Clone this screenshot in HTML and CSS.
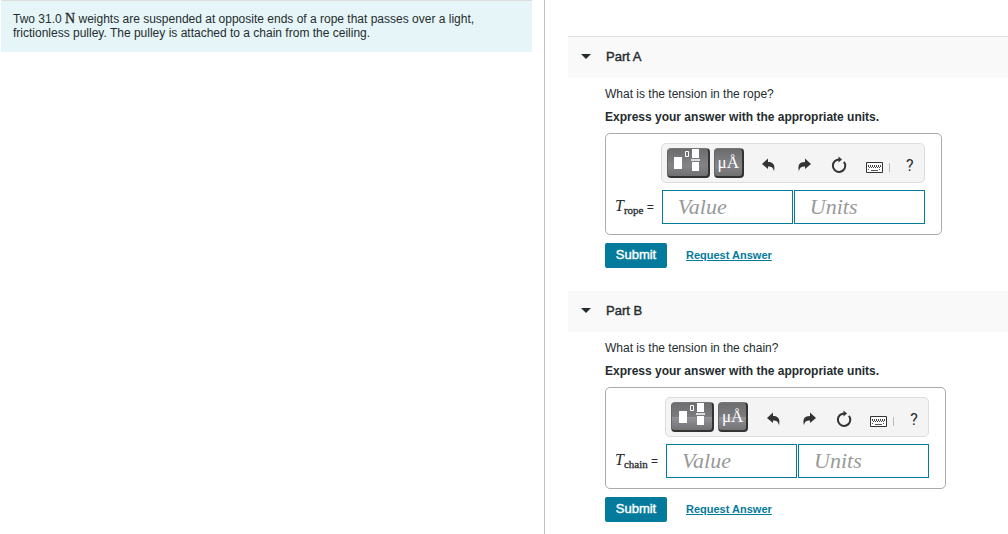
FILE: index.html
```html
<!DOCTYPE html>
<html lang="en">
<head>
<meta charset="utf-8">
<title>Pulley tension</title>
<link rel="stylesheet" href="styles.css">
</head>
<body>
<svg class="defs" aria-hidden="true">
  <symbol id="template" viewBox="0 0 27 22">
    <path fill="#fff" d="M0 8h8v12H0zM18 0h7v9h-7zM18 13h7v9h-7z"/>
    <path fill="#ddd" d="M17 10h9v2h-9z"/>
    <path fill="none" stroke="#fff" d="M11.500 2.500h3v5h-3z"/>
  </symbol>
  <symbol id="undo" viewBox="0 0 14 14">
    <path fill="#333" d="M0 6 6 0.500V4c5 0 7.500 2.500 6 9.500C11.500 9.800 9.500 8.500 6 8.500V11z"/>
  </symbol>
  <symbol id="redo" viewBox="0 0 14 14">
    <path fill="#333" d="M14 6 8 0.500V4C2.500 4 0.300 7 2 13.500 2.300 9.800 4.500 8.500 8 8.500V11z"/>
  </symbol>
  <symbol id="reset" viewBox="0 0 16 18">
    <path fill="none" stroke="#333" stroke-width="2" d="M8.500 3.500Q5.500 3.600 3.700 5.300A6.200 6.200 0 1 0 12.900 5.800"/>
    <path fill="#333" d="M7.500 0.500 11 3.500 7.500 6.500z"/>
  </symbol>
  <symbol id="keyboard" viewBox="0 0 24 11">
    <path fill="#fff" stroke="#333" d="M.5.500h16v10H.5z"/>
    <path fill="none" stroke="#444" stroke-dasharray="1 1" d="M2 3.500h13M3 5.500h12M2 4.500h13"/>
    <path fill="none" stroke="#555" stroke-dasharray="1 1" d="M2 7.500h2M13 7.500h2"/>
    <path fill="none" stroke="#555" d="M5 8.500h7"/>
    <path fill="none" stroke="#bbb" d="M23.500 1v9"/>
  </symbol>
</svg>
<div class="page">
  <section class="problem">
    <p class="statement">Two 31.0 <span class="unit">N</span> weights are suspended at opposite ends of a rope that passes over a light, frictionless pulley. The pulley is attached to a chain from the ceiling.</p>
  </section>
  <main class="parts">
    <section class="part part-first">
      <h2 class="part-header"><button class="part-toggle" type="button"><span class="caret"></span>Part A</button></h2>
      <div class="part-body">
        <p class="question">What is the tension in the rope?</p>
        <p class="instruction">Express your answer with the appropriate units.</p>
        <form class="answer">
          <div class="answer-box">
            <label class="symbol" for="rope-value"><i class="variable">T</i><span class="subscript">rope</span> =</label>
            <div class="editor">
              <div class="toolbar">
                <button class="palette palette-wide" type="button" aria-label="Templates"><svg class="template"><use href="#template"/></svg></button>
                <button class="palette" type="button">μÅ</button>
                <div class="tools">
                  <button class="tool" type="button" aria-label="Undo"><svg class="arrow"><use href="#undo"/></svg></button>
                  <button class="tool" type="button" aria-label="Redo"><svg class="arrow"><use href="#redo"/></svg></button>
                  <button class="tool" type="button" aria-label="Reset"><svg class="reset"><use href="#reset"/></svg></button>
                  <button class="tool tool-keyboard" type="button" aria-label="Keyboard shortcuts"><svg class="keyboard"><use href="#keyboard"/></svg></button>
                  <button class="tool tool-help" type="button">?</button>
                </div>
              </div>
              <div class="fields">
                <input class="field" id="rope-value" type="text" placeholder="Value">
                <input class="field" type="text" placeholder="Units" aria-label="Units">
              </div>
            </div>
          </div>
          <div class="actions">
            <button class="submit" type="button">Submit</button>
            <a class="request" href="#">Request Answer</a>
          </div>
        </form>
      </div>
    </section>
    <section class="part">
      <h2 class="part-header"><button class="part-toggle" type="button"><span class="caret"></span>Part B</button></h2>
      <div class="part-body">
        <p class="question">What is the tension in the chain?</p>
        <p class="instruction">Express your answer with the appropriate units.</p>
        <form class="answer">
          <div class="answer-box">
            <label class="symbol" for="chain-value"><i class="variable">T</i><span class="subscript">chain</span> =</label>
            <div class="editor">
              <div class="toolbar toolbar-glossy">
                <button class="palette palette-wide" type="button" aria-label="Templates"><svg class="template"><use href="#template"/></svg></button>
                <button class="palette" type="button">μÅ</button>
                <div class="tools">
                  <button class="tool" type="button" aria-label="Undo"><svg class="arrow"><use href="#undo"/></svg></button>
                  <button class="tool" type="button" aria-label="Redo"><svg class="arrow"><use href="#redo"/></svg></button>
                  <button class="tool" type="button" aria-label="Reset"><svg class="reset"><use href="#reset"/></svg></button>
                  <button class="tool tool-keyboard" type="button" aria-label="Keyboard shortcuts"><svg class="keyboard"><use href="#keyboard"/></svg></button>
                  <button class="tool tool-help" type="button">?</button>
                </div>
              </div>
              <div class="fields">
                <input class="field" id="chain-value" type="text" placeholder="Value">
                <input class="field" type="text" placeholder="Units" aria-label="Units">
              </div>
            </div>
          </div>
          <div class="actions">
            <button class="submit" type="button">Submit</button>
            <a class="request" href="#">Request Answer</a>
          </div>
        </form>
      </div>
    </section>
  </main>
</div>
</body>
</html>
```
FILE: styles.css
```css
* { box-sizing: border-box; }

body {
  margin: 0;
  background: #fff;
  color: #252c2f;
  font: 12px/15px "Liberation Sans", Arial, sans-serif;
}

h2, p { margin: 0; }

button {
  margin: 0;
  padding: 0;
  border: 0;
  background: none;
  color: inherit;
  font: inherit;
}

.defs { display: none; }

.page {
  display: grid;
  grid-template-columns: 545fr 463fr;
  min-height: 100vh;
}

.problem {
  padding: 0 12px 0 1px;
  border-right: 1px solid #bcc3c8;
}

.statement {
  padding: 11px 50px 12px 12px;
  border-top: 1px solid #ddd;
  background: #e6f5f7;
  line-height: 14px;
}

.unit {
  font-family: "Liberation Serif", serif;
  font-size: 14px;
  line-height: 1;
  -webkit-text-stroke: 0.3px;
}

.parts {
  display: flex;
  flex-direction: column;
  gap: 23px;
  padding: 36px 0 12px 23px;
}

.part-header {
  background: #f9f9f9;
  font-weight: 400;
}

.part-first .part-header { border-top: 1px solid #ddd; }

.part-toggle {
  display: flex;
  align-items: center;
  width: 100%;
  height: 41px;
  padding: 0 0 2px 13px;
  gap: 15px;
  font-size: 13px;
  -webkit-text-stroke: 0.4px;
}

.caret {
  border: 5px solid transparent;
  border-top-color: #252c2f;
  border-bottom: 0;
}

.part-body { padding: 9px 0 0 37px; }

.instruction {
  margin: 8px 0;
  font-weight: 700;
}

.answer-box {
  display: inline-flex;
  align-items: flex-end;
  gap: 7px;
  padding: 9px 16px 10px 9px;
  border: 1px solid #aaa;
  border-radius: 5px;
  vertical-align: top;
}

.symbol { padding-bottom: 9px; }

.variable {
  font: italic 16px/18px "Liberation Serif", serif;
}

.subscript {
  position: relative;
  top: 3px;
  font: 11px/12px "Liberation Serif", serif;
  -webkit-text-stroke: 0.3px;
}

.editor {
  display: flex;
  flex-direction: column;
  gap: 7px;
}

.toolbar {
  display: flex;
  align-items: center;
  gap: 4px;
  padding: 4px 0 4px 5px;
  border: 1px solid #ddd;
  border-radius: 5px;
  background: #f4f4f4;
}

.palette {
  display: grid;
  place-items: center;
  width: 30px;
  height: 30px;
  border-style: solid;
  border-width: 1px 2px 2px 1px;
  border-color: #777 #333 #333 #666;
  border-radius: 4px;
  background: linear-gradient(#6a6a6c, #848488 60%, #6c6c6e) border-box;
  color: #fff;
  font: 17px/20px "Liberation Serif", serif;
}

.palette-wide {
  width: 43px;
  align-items: start;
}

.toolbar-glossy .palette {
  background: linear-gradient(#6c6c6e, #7c7c7e 50%, #929298 51%, #6c6c6e) border-box;
}

.template {
  width: 27px;
  height: 22px;
}

.tools {
  display: flex;
  align-items: center;
  padding: 4px 0 0 4px;
}

.tool {
  display: grid;
  place-items: center;
  width: 35px;
  height: 24px;
}

.arrow {
  width: 14px;
  height: 14px;
}

.reset {
  width: 16px;
  height: 18px;
}

.tool-keyboard {
  justify-content: end;
  padding: 4px 2px 0 0;
}

.keyboard {
  width: 24px;
  height: 11px;
}

.tool-help {
  width: 32px;
  padding: 2px 0 0 4px;
  font: 16px/20px Roboto, sans-serif;
}

.fields {
  display: flex;
  gap: 1px;
  padding-left: 1px;
}

.field {
  width: 131px;
  height: 34px;
  padding: 0 15px;
  border: 1px solid #047a9c;
  border-radius: 0;
  background: #fff;
  font: italic 22px/28px "Liberation Serif", serif;
}

.field::placeholder { color: #999; }

.actions {
  display: flex;
  align-items: center;
  gap: 19px;
  padding-top: 8px;
}

.submit {
  width: 62px;
  height: 25px;
  padding-bottom: 2px;
  border-radius: 2px;
  background: #047a9c;
  color: #fff;
  font-size: 13px;
  -webkit-text-stroke: 0.4px;
}

.request {
  color: #047a9c;
  font-size: 11px;
  font-weight: 700;
}
```
